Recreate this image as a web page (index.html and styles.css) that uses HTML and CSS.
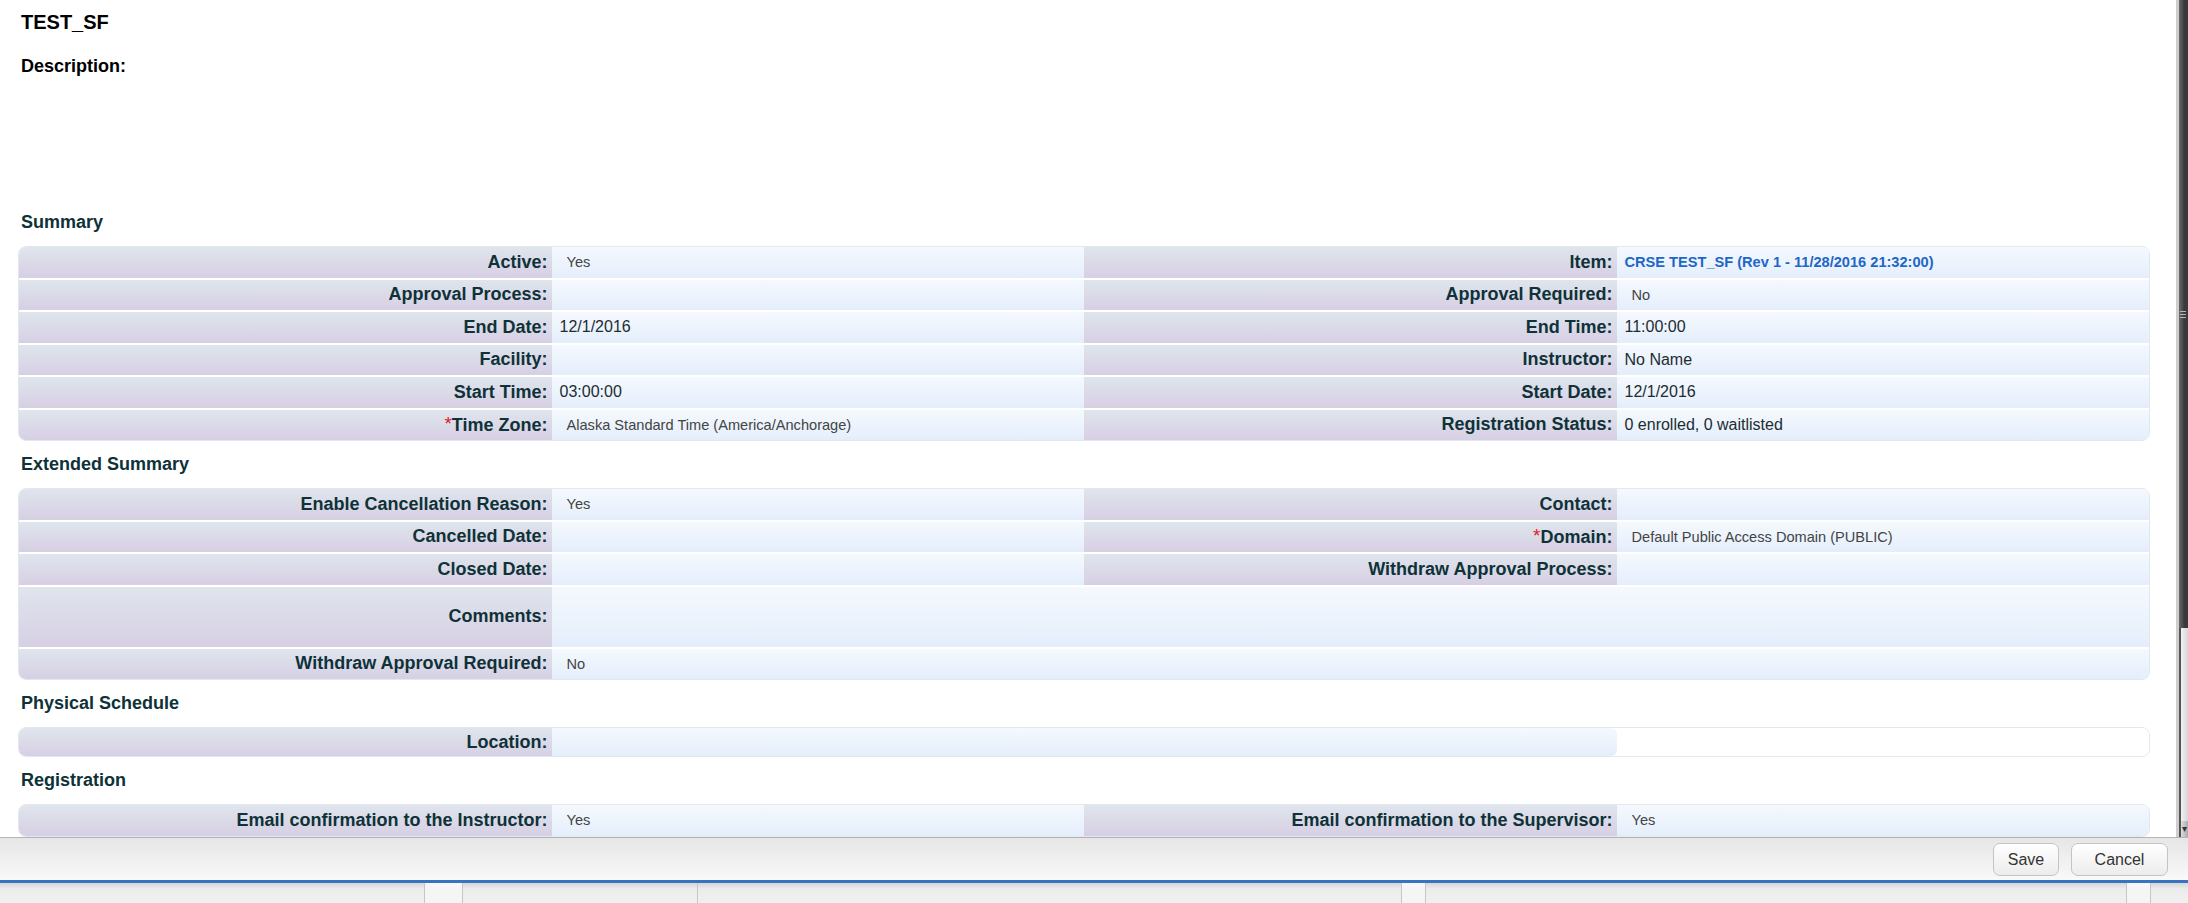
FILE: index.html
```html
<!DOCTYPE html>
<html lang="en">
<head>
    <meta charset="UTF-8">
    <title>TEST_SF</title>
    <link rel="stylesheet" href="styles.css">
</head>
<body>
    <div class="dialog">
        <div class="body">
            <div class="content">
                <h1 class="title">TEST_SF</h1>
                <h2 class="desc-label">Description:</h2>
                <div class="desc-text"></div>

                <h3 class="section">Summary</h3>
                <table class="grid">
                    <tr>
                        <td class="lbl">Active:</td>
                        <td class="val"><span class="soft">Yes</span></td>
                        <td class="lbl">Item:</td>
                        <td class="val"><a class="link" href="#">CRSE TEST_SF (Rev 1 - 11/28/2016 21:32:00)</a></td>
                    </tr>
                    <tr>
                        <td class="lbl">Approval Process:</td>
                        <td class="val"></td>
                        <td class="lbl">Approval Required:</td>
                        <td class="val"><span class="soft">No</span></td>
                    </tr>
                    <tr>
                        <td class="lbl">End Date:</td>
                        <td class="val">12/1/2016</td>
                        <td class="lbl">End Time:</td>
                        <td class="val">11:00:00</td>
                    </tr>
                    <tr>
                        <td class="lbl">Facility:</td>
                        <td class="val"></td>
                        <td class="lbl">Instructor:</td>
                        <td class="val">No Name</td>
                    </tr>
                    <tr>
                        <td class="lbl">Start Time:</td>
                        <td class="val">03:00:00</td>
                        <td class="lbl">Start Date:</td>
                        <td class="val">12/1/2016</td>
                    </tr>
                    <tr>
                        <td class="lbl"><span class="req">*</span>Time Zone:</td>
                        <td class="val"><span class="soft">Alaska Standard Time (America/Anchorage)</span></td>
                        <td class="lbl">Registration Status:</td>
                        <td class="val">0 enrolled, 0 waitlisted</td>
                    </tr>
                </table>

                <h3 class="section">Extended Summary</h3>
                <table class="grid">
                    <tr>
                        <td class="lbl">Enable Cancellation Reason:</td>
                        <td class="val"><span class="soft">Yes</span></td>
                        <td class="lbl">Contact:</td>
                        <td class="val"></td>
                    </tr>
                    <tr>
                        <td class="lbl">Cancelled Date:</td>
                        <td class="val"></td>
                        <td class="lbl"><span class="req">*</span>Domain:</td>
                        <td class="val"><span class="soft">Default Public Access Domain (PUBLIC)</span></td>
                    </tr>
                    <tr>
                        <td class="lbl">Closed Date:</td>
                        <td class="val"></td>
                        <td class="lbl">Withdraw Approval Process:</td>
                        <td class="val"></td>
                    </tr>
                    <tr class="tall">
                        <td class="lbl">Comments:</td>
                        <td class="val" colspan="3"></td>
                    </tr>
                    <tr>
                        <td class="lbl">Withdraw Approval Required:</td>
                        <td class="val"><span class="soft">No</span></td>
                        <td class="val" colspan="2"></td>
                    </tr>
                </table>

                <h3 class="section">Physical Schedule</h3>
                <table class="grid short">
                    <tr>
                        <td class="lbl">Location:</td>
                        <td class="val"></td>
                        <td class="val val-end"></td>
                        <td class="blank"></td>
                    </tr>
                </table>

                <h3 class="section">Registration</h3>
                <table class="grid">
                    <tr>
                        <td class="lbl">Email confirmation to the Instructor:</td>
                        <td class="val"><span class="soft">Yes</span></td>
                        <td class="lbl">Email confirmation to the Supervisor:</td>
                        <td class="val"><span class="soft">Yes</span></td>
                    </tr>
                </table>
            </div>

            <div class="scrollbar">
                <div class="sb-thumb"><span class="grip"></span></div>
                <div class="sb-track"></div>
                <div class="sb-arrow">&#9662;</div>
            </div>
        </div>

        <div class="footer">
            <button class="btn">Save</button>
            <button class="btn btn-cancel">Cancel</button>
        </div>

        <div class="under">
            <div class="col" style="width: 425px"></div>
            <div class="col col-light" style="width: 38px"></div>
            <div class="col" style="width: 235px"></div>
            <div class="col" style="width: 704px"></div>
            <div class="col col-light" style="width: 24px"></div>
            <div class="col" style="width: 701px"></div>
            <div class="col col-light" style="width: 24px"></div>
            <div class="col"></div>
        </div>
    </div>
</body>
</html>
```

FILE: styles.css
```css
* {
    box-sizing: border-box;
}

html, body {
    margin: 0;
    height: 100%;
    overflow: hidden;
}

body {
    background-color: #fff;
    font-family: "Liberation Sans", Arial, sans-serif;
}

.dialog {
    display: flex;
    flex-direction: column;
    height: 903px;
}

.body {
    display: flex;
    height: 837px;
    overflow: hidden;
}

.content {
    flex: 1;
    min-width: 0;
    padding: 0 26px 0 18px;
    overflow: hidden;
}

.title {
    margin: 10px 0 0 3px;
    font-size: 20px;
    line-height: 24px;
    color: #000;
}

.desc-label {
    margin: 21px 0 0 3px;
    font-size: 18px;
    line-height: 22px;
    color: #000;
}

.desc-text {
    height: 122px;
}

.section {
    margin: 0;
    padding: 11px 0 12px 3px;
    font-size: 18px;
    line-height: 24px;
    color: #0e3238;
}

/* grids */
.grid {
    width: 100%;
    table-layout: fixed;
    border-collapse: separate;
    border-spacing: 0;
    border: 1px solid #e3e7ee;
    border-radius: 8px;
    overflow: hidden;
}

.grid td {
    height: 32.5px;
    padding: 0;
    border-bottom: 2px solid #fff;
    vertical-align: middle;
    white-space: nowrap;
}

.grid tr:last-child td {
    height: 30.5px;
    border-bottom: 0;
}

.grid tr.tall td {
    height: 62px;
}

.grid.short tr:last-child td {
    height: 28px;
}

.lbl {
    background: linear-gradient(#dfe5ed, #d7cfe4);
    text-align: right;
    padding-right: 4px !important;
    font-size: 18px;
    font-weight: bold;
    color: #0e3238;
}

.val {
    background: linear-gradient(#f5f9fe, #e4eefb);
    padding-left: 8px !important;
    font-size: 16px;
    color: #1d2c31;
}

.val-end {
    border-radius: 0 6px 6px 0;
}

.grid td.blank {
    background-color: #fff;
}

.soft {
    padding-left: 7px;
    font-size: 14.6px;
    color: #444;
}

.link {
    font-size: 14.6px;
    font-weight: bold;
    color: #1e66c8;
    text-decoration: none;
}

.req {
    color: #e0201c;
    font-size: 19px;
    font-weight: normal;
    vertical-align: 1px;
}

/* scrollbar */
.scrollbar {
    flex: 0 0 12px;
    display: flex;
    flex-direction: column;
    border-left: 3px solid #cfcfcf;
    background-color: #e4e4e4;
}

.sb-thumb {
    height: 628px;
    display: flex;
    align-items: center;
    padding-left: 1px;
    background: linear-gradient(90deg, #6b6b6b, #3a3a3a 60%);
}

.grip {
    width: 6px;
    height: 7px;
    border-top: 1px solid #b8b8b8;
    border-bottom: 1px solid #b8b8b8;
    background: linear-gradient(#b8b8b8, #b8b8b8) center / 100% 1px no-repeat;
}

.sb-track {
    flex: 1;
    border-left: 2px solid #555;
    background: linear-gradient(90deg, #f2f2f2, #d6d6d6);
}

.sb-arrow {
    height: 16px;
    font-size: 10px;
    line-height: 16px;
    text-align: center;
    color: #333;
    border-left: 2px solid #555;
    background: linear-gradient(90deg, #ddd, #aaa);
}

/* footer */
.footer {
    height: 46px;
    display: flex;
    justify-content: flex-end;
    align-items: flex-start;
    gap: 12px;
    padding: 5px 20px 0 0;
    border-top: 1px solid #b4b4b4;
    border-bottom: 3px solid #3a72c2;
    background: linear-gradient(#e6e6e6, #f9f9f9);
}

.btn {
    height: 33px;
    width: 66px;
    padding: 0;
    font-family: "Liberation Sans", Arial, sans-serif;
    font-size: 16px;
    color: #333;
    border: 1px solid #c4c4c4;
    border-radius: 7px;
    background: linear-gradient(#fff, #ececec);
    cursor: pointer;
}

.btn-cancel {
    width: 97px;
}

.under {
    flex: 1;
    display: flex;
    background: linear-gradient(#d6d6d6, #ececec 30%, #f0f0f0);
}

.col {
    border-right: 1px solid #c6c6c6;
}

.col:last-child {
    flex: 1;
    border-right: 0;
}

.col-light {
    background-color: #f5f5f5;
}
```
